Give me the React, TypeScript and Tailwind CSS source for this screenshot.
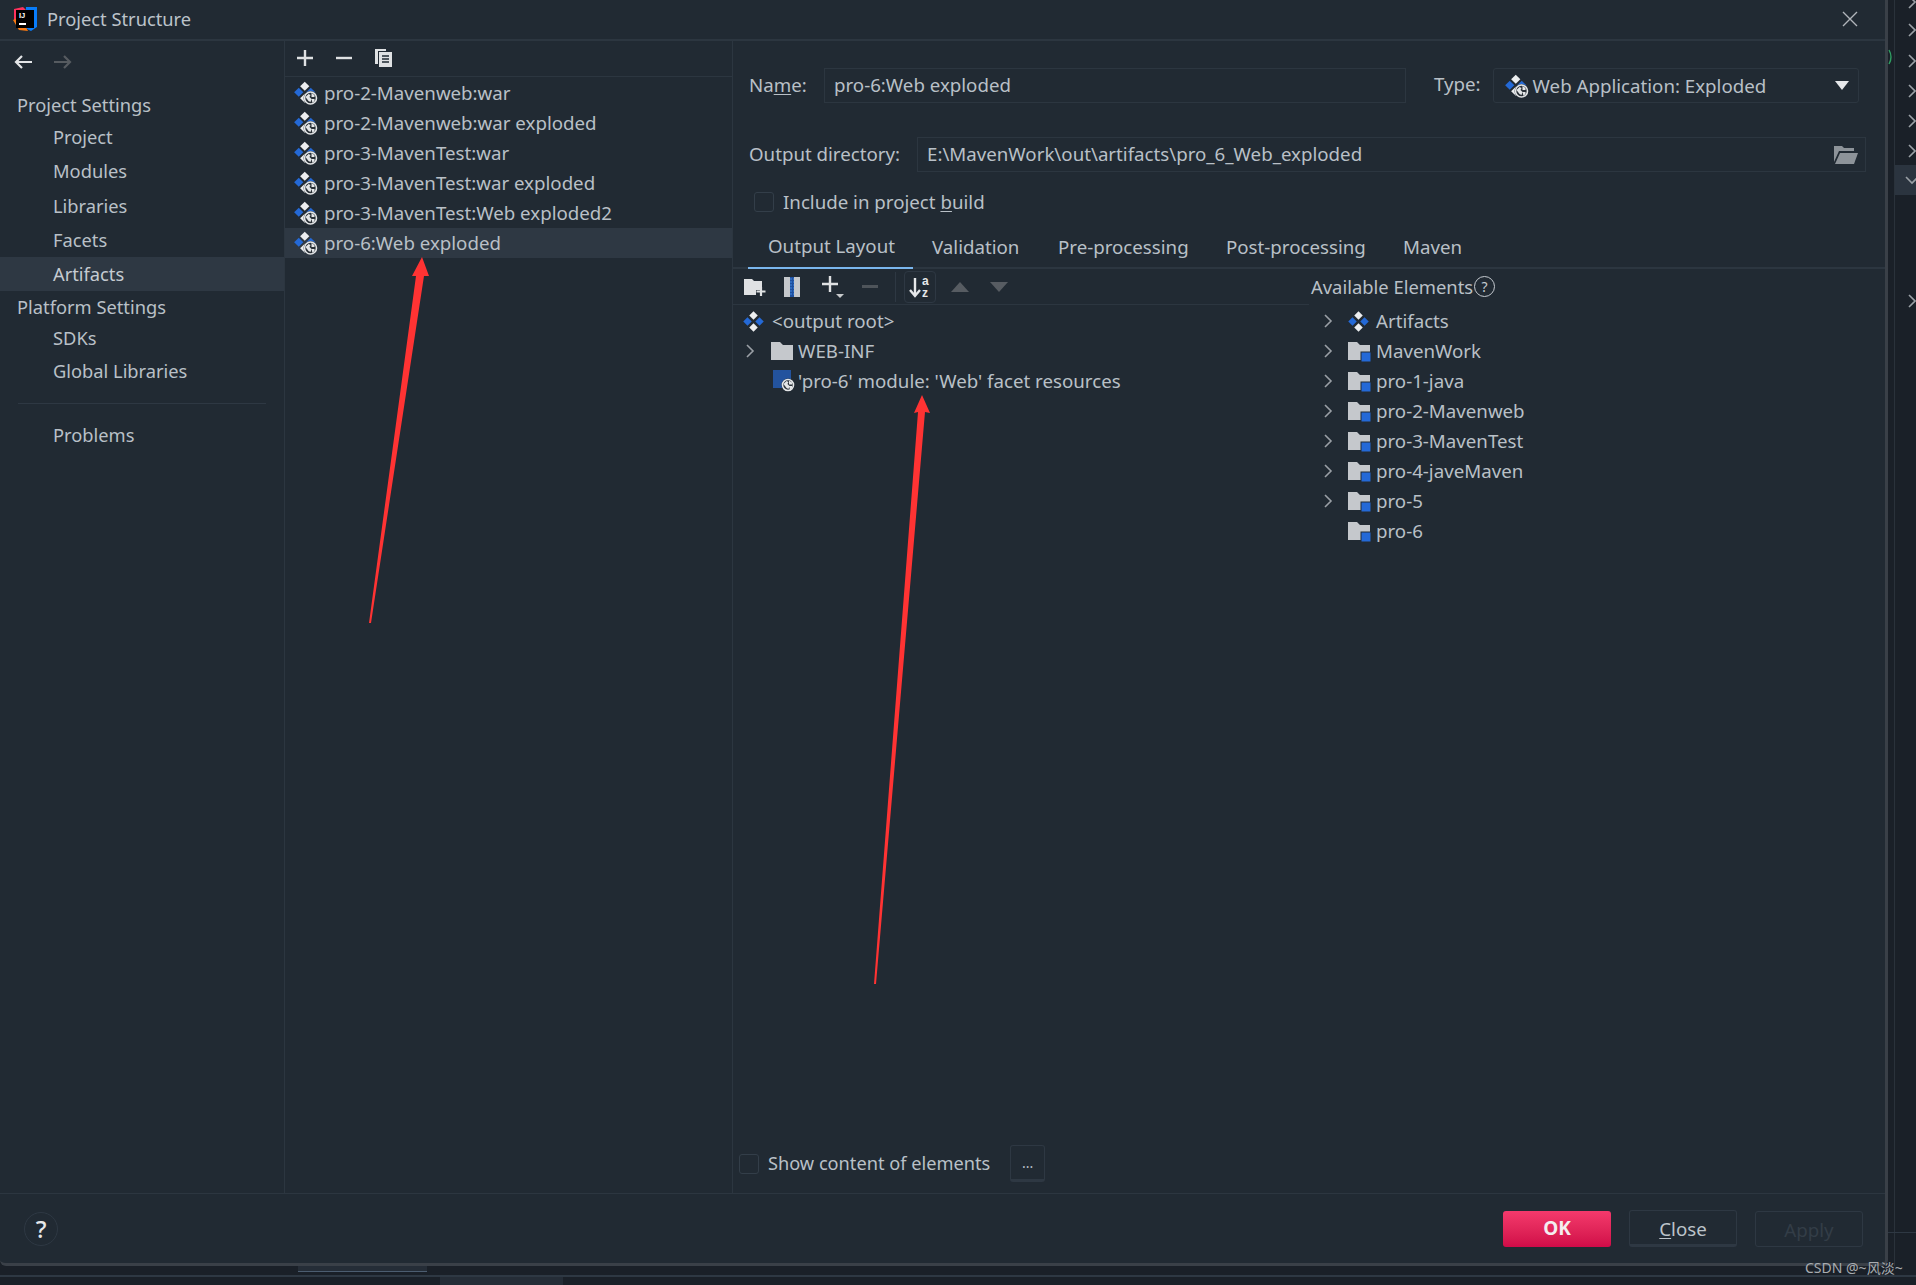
import React from 'react';

const font = { fontFamily: '"Noto Sans", "Noto Sans CJK SC", sans-serif' };

const Globe = ({ x, y, r = 5.5 }: { x: number; y: number; r?: number }) => (
  <g>
    <circle cx={x} cy={y} r={r + 1} fill="#212a33" />
    <circle cx={x} cy={y} r={r} fill="#2a3138" stroke="#e4e6e8" strokeWidth="1.6" />
    <path
      d={`M${x - r + 1} ${y - 1} l3 -3 l2 1 l-1 2 l2 2 l-1 3 l-2 -1 z M${x + 1} ${y - r + 1} l3 2 l0 2 l-3 0 z M${x + 1} ${y + 1} l3 0 l0 2 l-2 2 z`}
      fill="#e4e6e8"
    />
  </g>
);

const WebArtifactIcon = () => (
  <svg width="24" height="24" viewBox="0 0 24 24" className="shrink-0">
    <rect x="7.5" y="2" width="6.5" height="6.5" transform="rotate(45 10.75 5.25)" fill="#eceef0" />
    <rect x="1.5" y="8" width="6.5" height="6.5" transform="rotate(45 4.75 11.25)" fill="#2469d6" />
    <rect x="13.5" y="8" width="6.5" height="6.5" transform="rotate(45 16.75 11.25)" fill="#2469d6" />
    <rect x="7.5" y="14" width="6.5" height="6.5" transform="rotate(45 10.75 17.25)" fill="#eceef0" />
    <Globe x={16.5} y={17} r={6} />
  </svg>
);

const ArtifactIcon = () => (
  <svg width="21" height="21" viewBox="0 0 21 21" className="shrink-0">
    <rect x="7.5" y="1.5" width="6" height="6" transform="rotate(45 10.5 4.5)" fill="#eceef0" />
    <rect x="1.5" y="7.5" width="6" height="6" transform="rotate(45 4.5 10.5)" fill="#2469d6" />
    <rect x="13.5" y="7.5" width="6" height="6" transform="rotate(45 16.5 10.5)" fill="#2469d6" />
    <rect x="7.5" y="13.5" width="6" height="6" transform="rotate(45 10.5 16.5)" fill="#eceef0" />
  </svg>
);

const FolderIcon = ({ module }: { module?: boolean }) => (
  <svg width="24" height="22" viewBox="0 0 24 22" className="shrink-0">
    <path d="M0 2h9l3 3h10v15H0z" fill="#c5c8cc" />
    {module && <rect x="13" y="12" width="10" height="10" fill="#2469d6" stroke="#212a33" strokeWidth="1" />}
  </svg>
);

const ModuleWebIcon = () => (
  <svg width="22" height="22" viewBox="0 0 22 22" className="shrink-0">
    <rect x="0" y="0" width="18" height="18" fill="#23539e" />
    <Globe x={15} y={15} r={5.5} />
  </svg>
);

const Chevron = () => (
  <svg width="10" height="14" viewBox="0 0 10 14" className="shrink-0">
    <path d="M2 1l6 6-6 6" fill="none" stroke="#9aa0a6" strokeWidth="1.6" />
  </svg>
);

const Checkbox = () => <span className="block w-[20px] h-[20px] rounded-[3px] border border-[#333e49] bg-[#212a33]" />;

const sidebar: { label: string; h: string; indent?: boolean; active?: boolean }[] = [
  { label: 'Project Settings', h: 'h-[30px]' },
  { label: 'Project', h: 'h-[33px]', indent: true },
  { label: 'Modules', h: 'h-[35px]', indent: true },
  { label: 'Libraries', h: 'h-[35px]', indent: true },
  { label: 'Facets', h: 'h-[34px]', indent: true },
  { label: 'Artifacts', h: 'h-[34px]', indent: true, active: true },
  { label: 'Platform Settings', h: 'h-[31px]' },
  { label: 'SDKs', h: 'h-[31px]', indent: true },
  { label: 'Global Libraries', h: 'h-[36px]', indent: true },
];

const artifacts = [
  'pro-2-Mavenweb:war',
  'pro-2-Mavenweb:war exploded',
  'pro-3-MavenTest:war',
  'pro-3-MavenTest:war exploded',
  'pro-3-MavenTest:Web exploded2',
  'pro-6:Web exploded',
];

const modules = ['MavenWork', 'pro-1-java', 'pro-2-Mavenweb', 'pro-3-MavenTest', 'pro-4-javeMaven', 'pro-5', 'pro-6'];

const tabs: { label: string; w: string; active?: boolean }[] = [
  { label: 'Output Layout', w: 'w-[165px]', active: true },
  { label: 'Validation', w: 'w-[126px]' },
  { label: 'Pre-processing', w: 'w-[168px]' },
  { label: 'Post-processing', w: 'w-[177px]' },
  { label: 'Maven', w: 'w-[100px]' },
];

const stripChevrons = [2, 30, 61, 91, 121, 151];

export default function App() {
  return (
    <div
      className="relative w-[1916px] h-[1285px] overflow-hidden bg-[#1a2028] text-[18.7px] text-[#b9c0c7] flex flex-col"
      style={font}
    >
      <div className="flex h-[1266px]">
        {/* dialog */}
        <div className="w-[1888px] h-full flex flex-col bg-[#212a33] border-r-[3px] border-b-[3px] border-[#3a4048] rounded-br-[6px] rounded-bl-[6px]">
          <div className="h-[41px] shrink-0 flex items-center pl-[12px] pr-[27px] pb-[2px] border-b-2 border-[#2c3640]">
            <svg width="26" height="26" viewBox="0 0 26 26" className="shrink-0">
              <path d="M2 3l9-2 3 3-12 12z" fill="#fe315d" />
              <path d="M14 1h11v20l-6 4-6-3z" fill="#087cfa" />
              <path d="M1 14l6 10 9 1-8-14z" fill="#f97a12" />
              <rect x="4" y="4" width="18" height="18" fill="#000" />
              <rect x="7" y="17" width="7" height="2" fill="#fff" />
              <text x="7" y="12" fontSize="7.5" fontWeight="700" fill="#fff" fontFamily="Liberation Sans">IJ</text>
            </svg>
            <span className="ml-[9px] text-[18.3px] text-[#bcc3ca]">Project Structure</span>
            <svg width="16" height="16" viewBox="0 0 16 16" className="ml-auto">
              <path d="M1 1l14 14M15 1L1 15" stroke="#b0b5ba" strokeWidth="1.4" />
            </svg>
          </div>

          <div className="flex-1 flex min-h-0">
            {/* sidebar */}
            <div className="w-[285px] shrink-0 border-r border-[#2c3640] flex flex-col text-[18.3px]">
              <div className="h-[49px] flex items-center pl-[13px] pb-[7px] gap-[20px]">
                <svg width="20" height="16" viewBox="0 0 20 16">
                  <path d="M19 8H3M9 2L3 8l6 6" fill="none" stroke="#e3e5e7" strokeWidth="2.2" />
                </svg>
                <svg width="20" height="16" viewBox="0 0 20 16">
                  <path d="M1 8h16M11 2l6 6-6 6" fill="none" stroke="#565b60" strokeWidth="2.2" />
                </svg>
              </div>
              {sidebar.map((item) => (
                <div
                  key={item.label}
                  className={`${item.h} flex items-center ${item.indent ? 'pl-[53px]' : 'pl-[17px]'} ${item.active ? 'bg-[#2e3843] text-[#c5cbd1]' : ''}`}
                >
                  {item.label}
                </div>
              ))}
              <div className="mt-[14px] mx-[18px] h-[1px] bg-[#2e3843]" />
              <div className="mt-[14px] h-[34px] flex items-center pl-[53px]">Problems</div>
            </div>

            {/* artifact list */}
            <div className="w-[448px] shrink-0 border-r border-[#2c3640] flex flex-col">
              <div className="h-[36px] shrink-0 flex items-center pl-[11px] pb-[1px] gap-[21px] border-b border-[#2c3640]">
                <svg width="18" height="18" viewBox="0 0 18 18">
                  <path d="M9 1v16M1 9h16" stroke="#dfe1e3" strokeWidth="2.4" />
                </svg>
                <svg width="18" height="18" viewBox="0 0 18 18">
                  <path d="M1 9h16" stroke="#dfe1e3" strokeWidth="2.4" />
                </svg>
                <svg width="20" height="20" viewBox="0 0 20 20">
                  <path d="M1 1h11v2H4v13H1z" fill="#dfe1e3" />
                  <path d="M5 4h13v15H5z" fill="#dfe1e3" />
                  <path d="M8 8h7M8 11h7M8 14h7" stroke="#212a33" strokeWidth="1.3" />
                </svg>
              </div>
              <div className="pt-[1px]">
                {artifacts.map((name, i) => (
                  <div key={name} className={`h-[30px] flex items-center pl-[9px] ${i === 5 ? 'bg-[#2e3843]' : ''}`}>
                    <WebArtifactIcon />
                    <span className="ml-[6px] whitespace-nowrap">{name}</span>
                  </div>
                ))}
              </div>
            </div>

            {/* detail panel */}
            <div className="flex-1 min-w-0 flex flex-col">
              <div className="flex items-center mt-[27px] h-[35px] pl-[16px]">
                <span className="w-[75px]">
                  Na<span className="underline underline-offset-2">m</span>e:
                </span>
                <div className="w-[582px] h-full flex items-center pl-[9px] border border-[#2c3640] bg-[#212a33]">pro-6:Web exploded</div>
                <span className="ml-[28px] pb-[2px]">Type:</span>
                <div className="ml-[12px] w-[366px] h-full flex items-center pl-[11px] pr-[8px] rounded-[3px] border border-[#2c3640]">
                  <WebArtifactIcon />
                  <span className="ml-[4px] pt-[2px]">Web Application: Exploded</span>
                  <svg width="14" height="9" viewBox="0 0 14 9" className="ml-auto mr-[1px]">
                    <path d="M0 0h14L7 9z" fill="#e6e8ea" />
                  </svg>
                </div>
              </div>

              <div className="flex items-center mt-[34px] h-[35px] pl-[16px]">
                <span className="w-[168px]">Output directory:</span>
                <div className="w-[949px] h-full flex items-center pl-[9px] pr-[7px] border border-[#2c3640]">
                  <span>E:\MavenWork\out\artifacts\pro_6_Web_exploded</span>
                  <svg width="24" height="18" viewBox="0 0 24 18" className="ml-auto">
                    <path d="M0 0h8l2 2h10v3H5L0 16z" fill="#8d9399" />
                    <path d="M6 7h18l-4 11H1z" fill="#8d9399" />
                  </svg>
                </div>
              </div>

              <div className="flex items-center mt-[20px] h-[20px] pl-[21px]">
                <Checkbox />
                <span className="ml-[9px]">
                  Include in project <span className="underline underline-offset-2">b</span>uild
                </span>
              </div>

              <div className="mt-[20px] h-[37px] shrink-0 flex pl-[15px] border-b-2 border-[#2c3640]">
                {tabs.map((tab) => (
                  <div
                    key={tab.label}
                    className={`${tab.w} h-[37px] shrink-0 flex items-center pb-[7px] whitespace-nowrap ${tab.active ? 'pl-[20px] border-b-2 border-[#7ab6ee]' : 'pl-[19px]'}`}
                  >
                    {tab.label}
                  </div>
                ))}
              </div>

              <div className="flex-1 flex min-h-0">
                <div className="w-[576px] shrink-0">
                  <div className="h-[36px] flex items-center pl-[11px] border-b border-[#2c3640]">
                    <svg width="22" height="20" viewBox="0 0 22 20">
                      <path d="M0 2h8l2 2h8v9h-6v5H0z" fill="#dfe1e3" />
                      <path d="M17 10v9M12.5 14.5h9" stroke="#dfe1e3" strokeWidth="2.2" />
                    </svg>
                    <svg width="16" height="20" viewBox="0 0 16 20" className="ml-[18px]">
                      <rect x="0" y="0" width="16" height="20" fill="#c5c8cc" />
                      <rect x="6" y="0" width="4" height="20" fill="#1e4f9e" />
                      <path d="M6 2h4M6 5h4M6 8h4M6 11h4M6 14h4M6 17h4" stroke="#3f86e0" strokeWidth="1" strokeDasharray="2 1" />
                    </svg>
                    <div className="ml-[21px] relative w-[24px] h-[24px] mt-[1px]">
                      <svg width="24" height="24" viewBox="0 0 24 24">
                        <path d="M9 1v16M1 9h16" stroke="#dfe1e3" strokeWidth="2.4" />
                        <path d="M15 19h8l-4 4z" fill="#c8cacc" />
                      </svg>
                    </div>
                    <svg width="16" height="4" viewBox="0 0 16 4" className="ml-[17px]">
                      <rect width="16" height="3" fill="#4e545a" />
                    </svg>
                    <span className="ml-[17px] block w-[1px] h-[30px] bg-[#2e3843]" />
                    <div className="ml-[8px] w-[32px] h-[32px] flex items-center justify-center rounded-[4px] border border-[#2e3843]">
                      <svg width="24" height="24" viewBox="0 0 24 24">
                        <path d="M7 3v17M2 15l5 6 5-6" fill="none" stroke="#e6e8ea" strokeWidth="2.4" />
                        <text x="14" y="10" fontSize="12" fontWeight="700" fill="#e6e8ea" fontFamily="Liberation Sans">a</text>
                        <text x="14" y="22" fontSize="12" fontWeight="700" fill="#e6e8ea" fontFamily="Liberation Sans">z</text>
                      </svg>
                    </div>
                    <svg width="18" height="10" viewBox="0 0 18 10" className="ml-[15px]">
                      <path d="M0 10h18L9 0z" fill="#575c62" />
                    </svg>
                    <svg width="18" height="10" viewBox="0 0 18 10" className="ml-[21px]">
                      <path d="M0 0h18L9 10z" fill="#575c62" />
                    </svg>
                  </div>
                  <div className="pt-[1px]">
                    <div className="h-[30px] flex items-center pl-[10px]">
                      <ArtifactIcon />
                      <span className="ml-[8px] whitespace-nowrap">&lt;output root&gt;</span>
                    </div>
                    <div className="h-[30px] flex items-center pl-[12px]">
                      <Chevron />
                      <span className="ml-[16px]"><FolderIcon /></span>
                      <span className="ml-[3px]">WEB-INF</span>
                    </div>
                    <div className="h-[30px] flex items-center pl-[40px]">
                      <ModuleWebIcon />
                      <span className="ml-[3px] whitespace-nowrap">'pro-6' module: 'Web' facet resources</span>
                    </div>
                  </div>
                </div>

                <div className="flex-1 min-w-0">
                  <div className="h-[36px] flex items-center pl-[2px] pb-[1px] text-[18.4px]">
                    Available Elements
                    <span className="ml-[1px] w-[21px] h-[21px] rounded-full border-[1.5px] border-[#c5cad0] flex items-center justify-center text-[14px] text-[#c5cad0]">?</span>
                  </div>
                  <div className="pt-[1px] pl-[14px]">
                    <div className="h-[30px] flex items-center">
                      <Chevron />
                      <span className="ml-[15px]"><ArtifactIcon /></span>
                      <span className="ml-[7px]">Artifacts</span>
                    </div>
                    {modules.map((m, i) => (
                      <div key={m} className="h-[30px] flex items-center">
                        {i < 6 ? <Chevron /> : <span className="w-[10px]" />}
                        <span className="ml-[15px]"><FolderIcon module /></span>
                        <span className="ml-[4px]">{m}</span>
                      </div>
                    ))}
                  </div>
                </div>
              </div>

              <div className="shrink-0 flex items-center h-[37px] mb-[11px] pl-[6px]">
                <Checkbox />
                <span className="ml-[9px] text-[18.2px]">Show content of elements</span>
                <div className="ml-[20px] w-[35px] h-[37px] rounded-[3px] border border-[#2e3843] border-b-[3px] flex items-center justify-center text-[14px]">...</div>
              </div>
            </div>
          </div>

          {/* footer */}
          <div className="h-[70px] shrink-0 border-t border-[#2c3640] flex items-center pl-[24px] pr-[22px]">
            <div className="w-[34px] h-[34px] rounded-full border border-[#2e3843] flex items-center justify-center text-[24px] font-medium text-[#e6e8ea]">?</div>
            <div className="ml-auto w-[108px] h-[36px] rounded-[3px] bg-gradient-to-b from-[#f4396c] to-[#d00a48] flex items-center justify-center font-bold text-[#f4eef0] text-[19px]">OK</div>
            <div className="ml-[18px] w-[108px] h-[37px] rounded-[3px] border border-[#2e3843] border-b-[3px] flex items-center justify-center pt-[3px] text-[#bcc3ca]">
              <span><span className="underline underline-offset-2">C</span>lose</span>
            </div>
            <div className="ml-[18px] w-[108px] h-[36px] rounded-[3px] border border-[#2e3843] flex items-center justify-center pt-[3px] text-[#333d47]">Apply</div>
          </div>
        </div>

        {/* IDE behind the dialog */}
        <div className="flex-1 relative border-l border-[#2a323b] ml-[6px]">
          <div className="absolute top-[165px] left-0 right-0 h-[30px] bg-[#2b343f]" />
          {stripChevrons.map((y) => (
            <svg key={y} width="10" height="14" viewBox="0 0 10 14" className="absolute left-[12px]" style={{ top: y - 7 }}>
              <path d="M2 1l6 6-6 6" fill="none" stroke="#9aa0a6" strokeWidth="1.6" />
            </svg>
          ))}
          <svg width="14" height="10" viewBox="0 0 14 10" className="absolute left-[10px] top-[175px]">
            <path d="M1 2l6 6 6-6" fill="none" stroke="#9aa0a6" strokeWidth="1.6" />
          </svg>
          <svg width="10" height="14" viewBox="0 0 10 14" className="absolute left-[12px] top-[294px]">
            <path d="M2 1l6 6-6 6" fill="none" stroke="#9aa0a6" strokeWidth="1.6" />
          </svg>
          <svg width="6" height="16" viewBox="0 0 6 16" className="absolute -left-[7px] top-[49px]">
            <path d="M1 1q4 7 0 14" fill="none" stroke="#2f9e62" strokeWidth="1.4" />
          </svg>
          <div className="absolute top-[1232px] -left-[7px] right-0 h-[1px] bg-[#2e3843]" />
        </div>
      </div>

      {/* bottom strip */}
      <div className="flex-1 flex flex-col">
        <div className="h-[9px] pl-[298px]">
          <div className="w-[129px] h-[6px] bg-[#252d37] border-b border-[#4c5d70]" />
        </div>
        <div className="h-[2px] bg-[#2e3843]" />
        <div className="flex-1 pl-[440px]">
          <div className="w-[123px] h-full bg-[#252d37]" />
        </div>
      </div>

      {/* annotation arrows drawn on top of the screenshot */}
      <svg width="1916" height="1285" viewBox="0 0 1916 1285" className="absolute inset-0 pointer-events-none">
        <path d="M369 623L416 276 L412 276 L422 257 L429 276 L424 276 L371 623z" fill="#ff3333" />
        <path d="M874 984L918 412 L914 413 L922 395 L930 413 L925 412 L876 984z" fill="#ff3333" />
      </svg>

      <span className="absolute left-[1805px] top-[1257px] text-[14px] text-[#a8acb0] whitespace-nowrap">CSDN @~风淡~</span>
    </div>
  );
}
